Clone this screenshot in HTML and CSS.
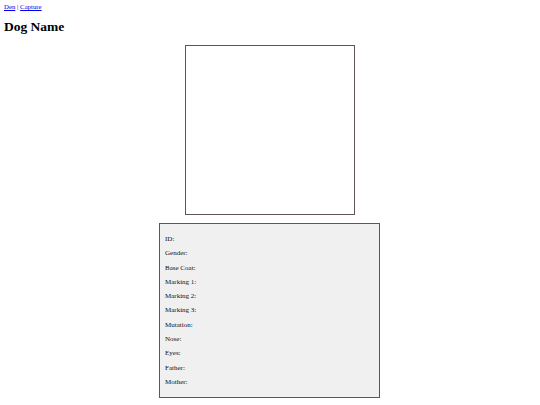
FILE: index.html
```html
<!DOCTYPE html>
<html>
<head>
<meta charset="utf-8">
<link rel="stylesheet" href="styles.css">
</head>
<body>
<nav class="nav"><a href="#">Den</a> | <a href="#">Capture</a></nav>
<h1 class="title">Dog Name</h1>
<div class="photo"></div>
<div class="info">
  <p>ID:</p>
  <p>Gender:</p>
  <p>Base Coat:</p>
  <p>Marking 1:</p>
  <p>Marking 2:</p>
  <p>Marking 3:</p>
  <p>Mutation:</p>
  <p>Nose:</p>
  <p>Eyes:</p>
  <p>Father:</p>
  <p>Mother:</p>
</div>
</body>
</html>
```
FILE: styles.css
```css
* {
  box-sizing: border-box;
}
body {
  margin: 0;
  padding: 3px 4px;
  font-family: "Liberation Serif", serif;
  color: #000;
  background: #fff;
}
.nav {
  font-size: 6.8px;
  line-height: 8px;
  height: 8px;
}
.nav a {
  color: #0000ee;
  text-decoration: underline;
}
.title {
  font-size: 13.5px;
  line-height: 18px;
  margin: 7px 0 0 0;
  font-weight: bold;
}
.photo {
  width: 170px;
  height: 170px;
  border: 1.5px solid #62525a;
  margin: 9px 0 0 181px;
}
.info {
  width: 221px;
  margin: 8px 0 0 155px;
  border: 1.5px solid #62525a;
  background: #f0f0f0;
  padding: 8px 5px 8px 5px;
  font-size: 7px;
  color: #111;
}
.info p {
  margin: 0;
  line-height: 14.3px;
  height: 14.3px;
}
```
